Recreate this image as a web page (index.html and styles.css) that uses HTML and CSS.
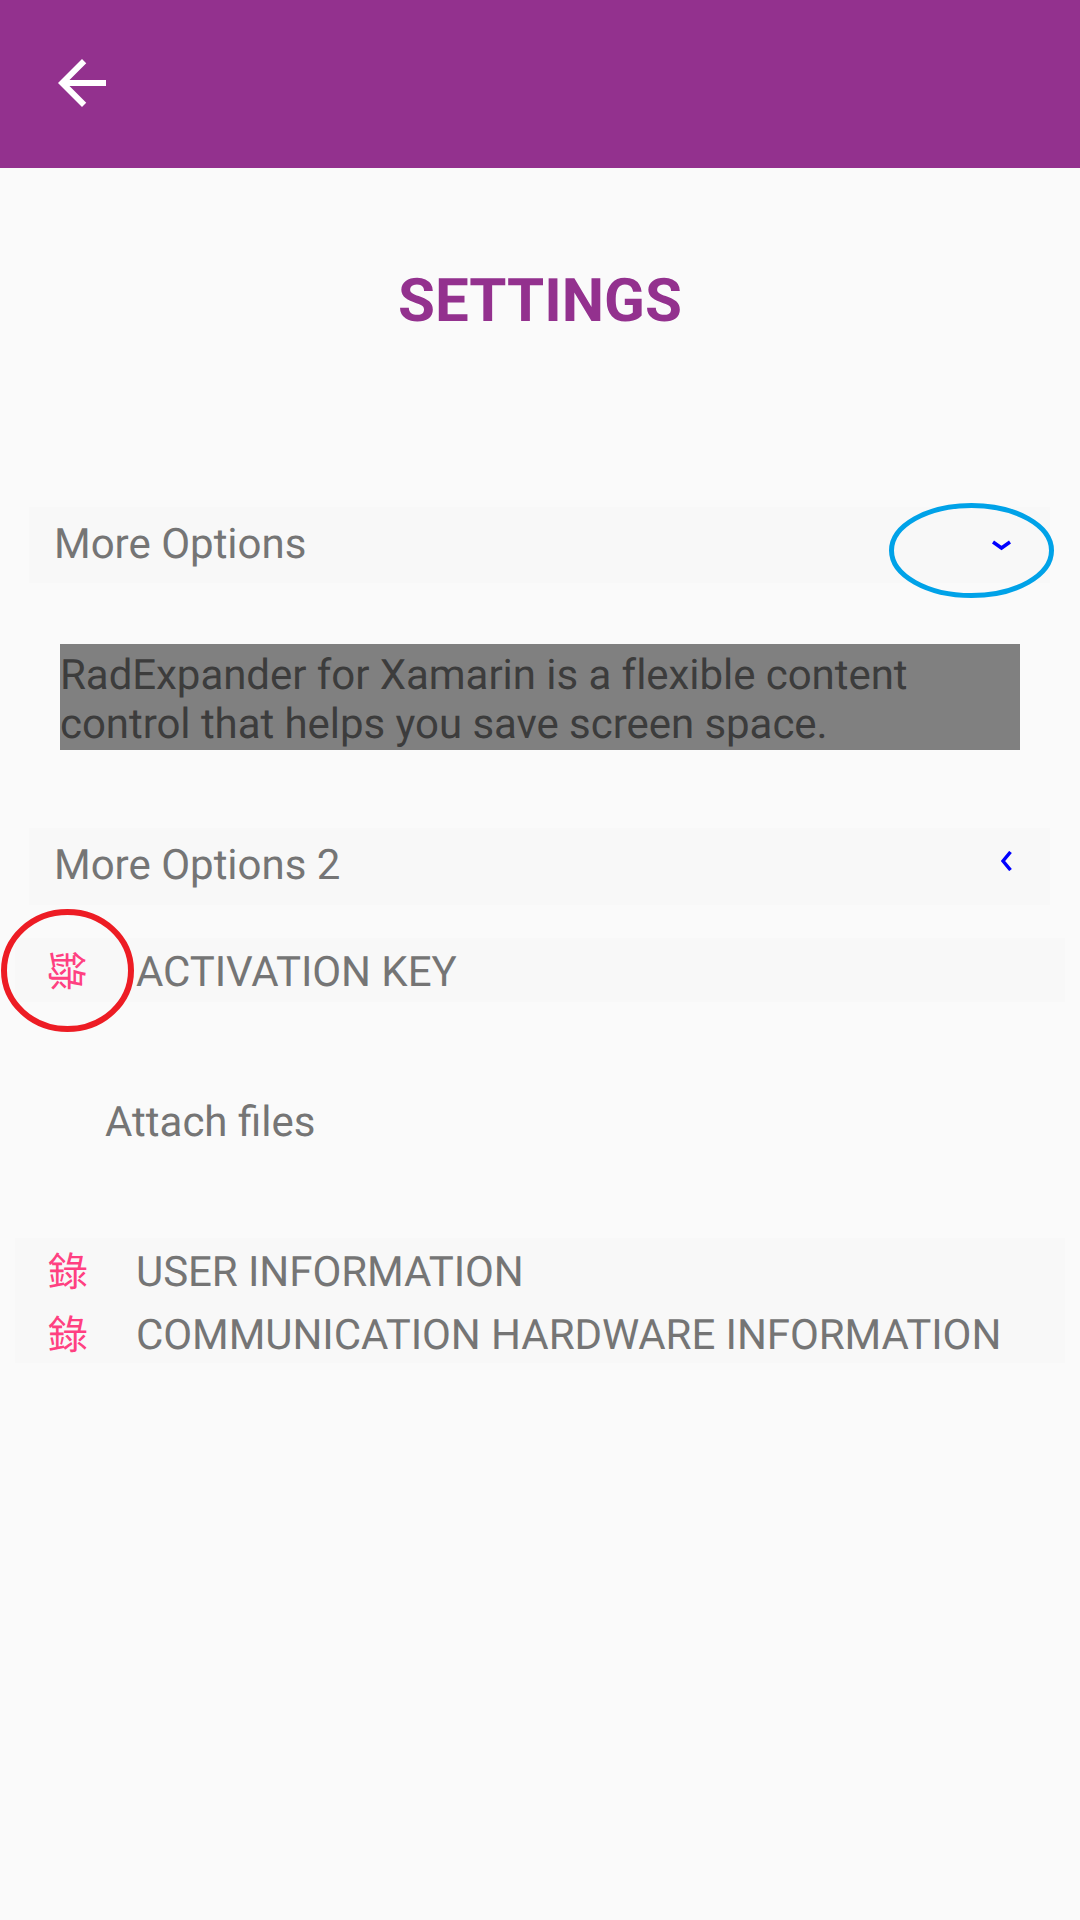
FILE: index.html
```html
<!DOCTYPE html>
<html lang="en">
<head>
  <meta charset="UTF-8">
  <meta name="viewport" content="width=device-width, initial-scale=1.0">
  <title>Settings</title>
  <link rel="stylesheet" href="styles.css">
</head>
<body>
  <div class="page">
    <header class="toolbar">
      <svg class="back" viewBox="0 0 24 24"><path d="M20 11H7.83l5.59-5.59L12 4l-8 8 8 8 1.41-1.41L7.83 13H20v-2z"/></svg>
    </header>

    <h1 class="title">SETTINGS</h1>

    <div class="expander first">
      <span>More Options</span>
      <svg class="chevron down" viewBox="0 0 19 11"><path d="M1 2l8.5 6L18 2"/></svg>
    </div>
    <div class="panel">RadExpander for Xamarin is a flexible content control that helps you save screen space.</div>

    <div class="expander second">
      <span>More Options 2</span>
      <svg class="chevron left" viewBox="0 0 11 20"><path d="M9.5 1L2 10l7.5 9"/></svg>
    </div>

    <div class="group key">
      <div class="item"><span class="glyph turned">錄</span><span>ACTIVATION KEY</span></div>
    </div>

    <div class="attach">Attach files</div>

    <div class="group info">
      <div class="item"><span class="glyph">錄</span><span>USER INFORMATION</span></div>
      <div class="item"><span class="glyph">錄</span><span>COMMUNICATION HARDWARE INFORMATION</span></div>
    </div>

    <!-- hand drawn marks on top of the screenshot -->
    <svg class="mark mark-blue" viewBox="0 0 165 95"><ellipse cx="82.5" cy="47.5" rx="80" ry="45"/></svg>
    <svg class="mark mark-red" viewBox="0 0 133 123"><ellipse cx="66.5" cy="61.5" rx="63.5" ry="58.5"/></svg>
  </div>
</body>
</html>
```

FILE: styles.css
```css
body {
  margin: 0;
  background: #fafafa;
  font-family: Roboto, "Noto Sans CJK TC", sans-serif;
  color: #757575;
  text-rendering: geometricPrecision;
}
.page {
  position: relative;
  height: 1920px;
  overflow: hidden;
}
.toolbar {
  height: 168px;
  background: #93318e;
  display: flex;
  align-items: center;
  padding-left: 46px;
  box-sizing: border-box;
}
.back {
  width: 72px;
  height: 72px;
  fill: #fff;
  margin-top: -2px;
}
.title {
  margin: 96px 0 0;
  height: 72px;
  line-height: 74px;
  text-align: center;
  font-size: 60px;
  font-weight: 700;
  color: #93318e;
}
.expander {
  margin: 0 30px 0 29px;
  background: #f8f8f8;
  display: flex;
  justify-content: space-between;
  font-size: 42px;
  padding-left: 25px;
}
.expander.first {
  margin-top: 171px;
  height: 76px;
  line-height: 75px;
}
.expander.second {
  margin-top: 78px;
  height: 77px;
  line-height: 75px;
}
.chevron {
  fill: none;
  stroke: #0000ff;
  stroke-width: 3.5;
}
.chevron.down {
  width: 19px;
  height: 11px;
  margin: 33px 39px 0 0;
}
.chevron.left {
  width: 11px;
  height: 20px;
  margin: 23px 38px 0 0;
}
.panel {
  margin: 61px 60px 0;
  background: #808080;
  color: #3c3c3c;
  font-size: 42px;
  letter-spacing: -0.05px;
  height: 106px;
  padding: 7px 0 0 0;
  box-sizing: border-box;
}
.group {
  margin: 0 15px;
  background: #f8f8f8;
}
.group.key {
  margin-top: 33px;
  height: 64px;
}
.group.info {
  margin-top: 82px;
  height: 125px;
}
.item {
  display: flex;
  align-items: center;
  height: 63px;
  padding-top: 6px;
  box-sizing: border-box;
  font-size: 42px;
  letter-spacing: -0.07px;
  white-space: nowrap;
}
.glyph {
  width: 40px;
  margin: -7px 48px 0 33px;
  text-align: center;
  font-size: 40px;
  color: #ff4081;
}
.glyph.turned {
  margin: -4px 47px 0 34px;
  transform: rotate(90deg);
}
.attach {
  margin: 0 0 0 105px;
  height: 70px;
  line-height: 74px;
  padding-top: 84px;
  font-size: 42px;
}
.mark {
  position: absolute;
  fill: none;
  stroke-width: 5;
}
.mark-blue {
  left: 889px;
  top: 503px;
  width: 165px;
  height: 95px;
  stroke: #00a2e8;
}
.mark-red {
  left: 1px;
  top: 909px;
  width: 133px;
  height: 123px;
  stroke: #ed1c24;
  stroke-width: 6;
}
```
